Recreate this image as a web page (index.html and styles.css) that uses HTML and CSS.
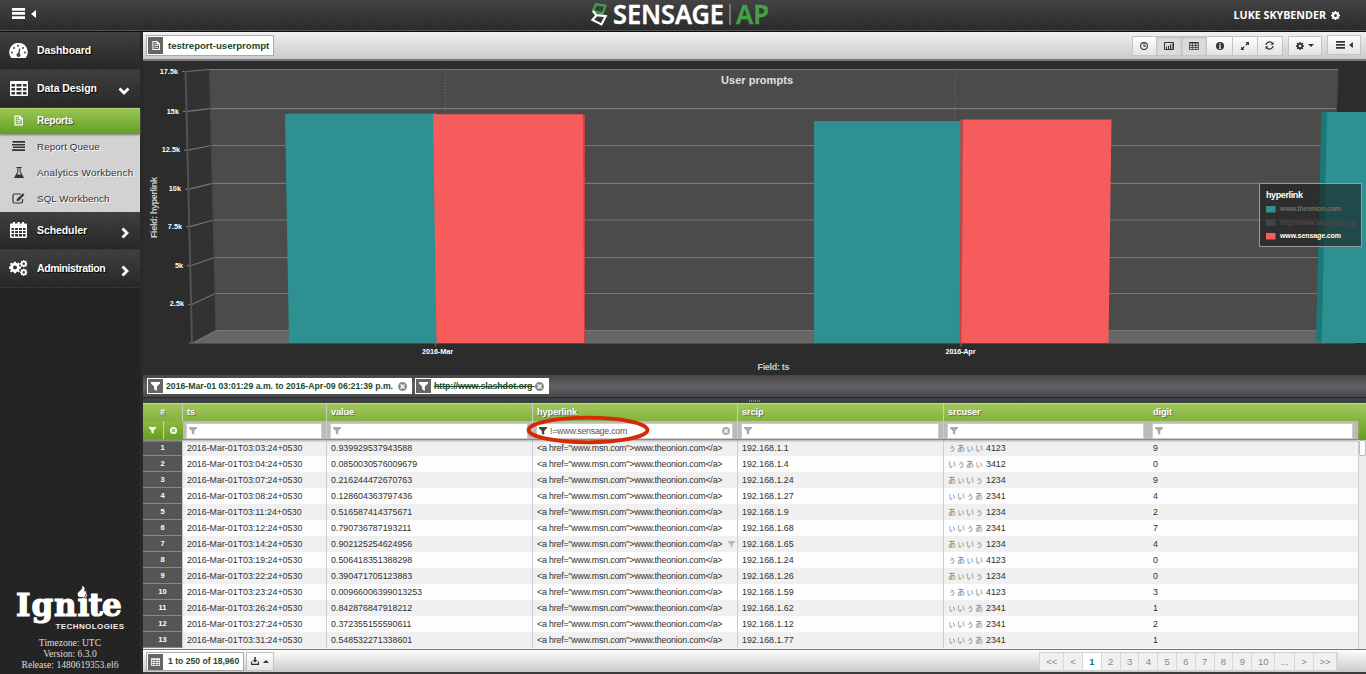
FILE: index.html
```html
<!DOCTYPE html>
<html lang="en">
<head>
<meta charset="utf-8">
<title>Sensage AP</title>
<link rel="stylesheet" href="styles.css">
</head>
<body>
<svg class="sprite" aria-hidden="true">
  <symbol id="i-funnel" viewBox="0 0 10 10"><path d="M0 0h10v1.600L6.500 5v5L3.500 8V5L0 1.600z"/></symbol>
  <symbol id="i-clear" viewBox="0 0 10 10"><path fill-rule="evenodd" d="M5 0a5 5 0 1 1 0 10A5 5 0 0 1 5 0zM3.300 2.300l-1 1L4 5 2.300 6.700l1 1L5 6l1.700 1.700 1-1L6 5l1.700-1.700-1-1L5 4z"/></symbol>
  <symbol id="i-doc" viewBox="0 0 10 11"><path fill-rule="evenodd" d="M.5 0h6L10 3.300V11H.5zM1.800 1.200v8.600h6.900V4.300H5.600V1.200zM3 5.200h4.500v1H3zM3 7.400h4.500v1H3zM3 2.800h1.700v1H3z"/></symbol>
  <symbol id="i-table" viewBox="0 0 18 15"><path fill-rule="evenodd" d="M1 0h16a1 1 0 0 1 1 1v13a1 1 0 0 1-1 1H1a1 1 0 0 1-1-1V1a1 1 0 0 1 1-1zM1.500 3v2.500H5V3zm5 0v2.500h5V3zM13 3v2.500h3.500V3zM1.500 7v2.500H5V7zm5 0v2.500h5V7zM13 7v2.500h3.500V7zM1.500 11v2.500H5V11zm5 0v2.500h5V11zm6.500 0v2.500h3.500V11z"/></symbol>
  <symbol id="i-cog" viewBox="0 0 12 12"><path fill-rule="evenodd" d="M5 0h2l.3 1.600 1 .4L9.700 1.100 11 2.400 10 3.800l.4 1 1.600.3v2l-1.600.3-.4 1 1 1.300-1.300 1.300-1.400-.9-1 .4L7 12H5l-.3-1.500-1-.4-1.400.9L1 9.700l.9-1.300-.4-1L0 7V5l1.500-.3.400-1L1 2.400 2.300 1.100l1.400.9 1-.4zM6 4a2 2 0 1 0 0 4 2 2 0 0 0 0-4z"/></symbol>
  <symbol id="i-menu" viewBox="0 0 13 11"><path d="M0 0h13v2.700H0zM0 4.100h13v2.700H0zM0 8.200h13v2.700H0z"/></symbol>
  <symbol id="i-left" viewBox="0 0 5 8"><path d="M5 0v8L0 4z"/></symbol>
  <symbol id="i-down" viewBox="0 0 8 4"><path d="M0 0h8L4 4z"/></symbol>
  <symbol id="i-up" viewBox="0 0 8 4"><path d="M0 4h8L4 0z"/></symbol>
</svg>

<header class="top">
  <div class="top-menu"><svg class="menu-ic"><use href="#i-menu"/></svg><svg class="tri-ic"><use href="#i-left"/></svg></div>
  <svg class="logo" width="184" height="30" viewBox="588 0 184 30">
    <path d="M596 4.200l9.500 1.600-2.800 7.600-9.800-2.300zM602.700 13.400l-4 2" fill="none" stroke="#43a047" stroke-width="2.200"/>
    <path d="M596.500 15.200l9.200.9-4.200 8.300-9-4.400zM592.900 11l3.600 4.200" fill="none" stroke="#fff" stroke-width="2.200"/>
    <text x="613" y="24" class="logo-name" textLength="111" lengthAdjust="spacingAndGlyphs">SENSAGE</text>
    <path d="M730 4v21" stroke="#8b8b8b" stroke-width="1.500"/>
    <text x="736" y="24" class="logo-ap" textLength="33" lengthAdjust="spacingAndGlyphs">AP</text>
  </svg>
  <div class="user">LUKE SKYBENDER <svg class="cog-ic"><use href="#i-cog"/></svg></div>
</header>

<div class="body">
  <aside class="side">
    <a class="item"><span class="ic"><svg width="19" height="15" viewBox="0 0 19 15"><path fill="#fff" d="M2.300 15A9.300 9.300 0 1 1 16.700 15z"/><path d="M9.300 12.500l1.500-7" stroke="#333" stroke-width="1.200"/><g fill="#444"><circle cx="9.500" cy="12" r="2"/><circle cx="3" cy="9.500" r="1"/><circle cx="16" cy="9.500" r="1"/><circle cx="5" cy="5" r="1"/><circle cx="14" cy="5" r="1"/><circle cx="9" cy="2.700" r="1"/></g></svg></span><span class="lbl">Dashboard</span></a>
    <a class="item"><span class="ic"><svg width="18" height="15"><use href="#i-table"/></svg></span><span class="lbl">Data Design</span><svg class="chev" width="12" height="8" viewBox="0 0 12 8"><path d="M1.500 1.500L6 6l4.500-4.500"/></svg></a>
    <a class="sub active"><span class="ic"><svg width="9" height="11"><use href="#i-doc"/></svg></span><span>Reports</span></a>
    <a class="sub"><span class="ic"><svg width="13" height="10" viewBox="0 0 13 10"><path d="M0 0h13v1.800H1zM0 2.900h13v1.500H0zM1 5.600h12v1.400H1zM0 8.200h13V10H0z"/></svg></span><span class="queue">Report Queue</span></a>
    <a class="sub"><span class="ic"><svg width="10" height="11" viewBox="0 0 10 11"><path fill-rule="evenodd" d="M2.500 0h5v1H6.600v3.500L10 11H0l3.400-6.500V1h-.9zM4.400 1v3.800L3 7.500h4L5.600 4.800V1z"/></svg></span><span class="analytics">Analytics Workbench</span></a>
    <a class="sub"><span class="ic"><svg width="13" height="11" viewBox="0 0 13 11"><path d="M9 1H2.500Q1 1 1 2.500v6Q1 10 2.500 10h6.500Q10.500 10 10.500 8.500V6" fill="none" stroke="#333" stroke-width="1.200"/><path d="M11 .3l1.500 1.500L6.500 8H4.700V6.300z"/></svg></span><span class="sql">SQL Workbench</span></a>
    <a class="item"><span class="ic"><svg width="17" height="16" viewBox="0 0 17 16"><path fill="#fff" fill-rule="evenodd" d="M1 1.500h2V0h2v1.500h2.500V0h2v1.500H12V0h2v1.500h2a1 1 0 0 1 1 1V15a1 1 0 0 1-1 1H1a1 1 0 0 1-1-1V2.500a1 1 0 0 1 1-1zM1.500 6v2H4V6zm3.600 0v2H8V6zM9 6v2h3V6zm4 0v2h2.500V6zM1.500 9v2H4V9zm3.600 0v2H8V9zM9 9v2h3V9zm4 0v2h2.500V9zM1.500 12v2.500H4V12zm3.600 0v2.500H8V12zM9 12v2.500h3V12zm4 0v2.500h2.500V12z"/></svg></span><span class="lbl">Scheduler</span><svg class="chev right" width="8" height="12" viewBox="0 0 8 12"><path d="M1.500 1.500L6 6l-4.500 4.500"/></svg></a>
    <a class="item"><span class="ic"><svg width="19" height="16" viewBox="0 0 19 16"><use href="#i-cog" x="0" y="1.500" width="12" height="12"/><use href="#i-cog" x="11" y="0" width="7.500" height="7.500"/><use href="#i-cog" x="11" y="8.500" width="7.500" height="7.500"/></svg></span><span class="lbl admin">Administration</span><svg class="chev right" width="8" height="12" viewBox="0 0 8 12"><path d="M1.500 1.500L6 6l-4.500 4.500"/></svg></a>
    <div class="brand">
      <svg width="112" height="50" viewBox="14 582 112 50">
        <text x="16 31.500 54 77.500 88.500 102" y="616" class="ignite">Ignite</text>
        <path d="M79 597.500q-4-4 1-7 3-2 1.500-5.500 5 2.500 3 6 1.500 0 1-1.500 2.500 4-1 8z" fill="#fff" stroke="#242424" stroke-width=".8"/>
        <text x="55.500" y="629" class="tech" textLength="68.500">TECHNOLOGIES</text>
      </svg>
      <p>Timezone: UTC</p><p>Version: 6.3.0</p><p>Release: 1480619353.el6</p>
    </div>
  </aside>

  <main class="main">
    <div class="toolbar">
      <div class="namebox"><span class="sq"><svg width="8" height="9"><use href="#i-doc"/></svg></span><span class="name">testreport-userprompt</span></div>
      <div class="tools">
        <div class="group">
          <span class="btn"><svg width="8" height="8" viewBox="0 0 9 9"><path d="M4.500 2v2.700h2.300M4.500.7a3.800 3.800 0 1 1 0 7.600 3.800 3.800 0 0 1 0-7.600z" fill="none" stroke="#333" stroke-width="1.200"/></svg></span>
          <span class="btn on"><svg width="10" height="8" viewBox="0 0 10 8"><path d="M.5.5h9v7h-9z" fill="none" stroke="#333"/><path d="M2 4.500h1V7H2zM4 3.700h1V7H4zM6 2.500h1V7H6zM7.800 1.500h.8V7h-.8z"/></svg></span>
          <span class="btn on"><svg width="10" height="8"><use href="#i-table"/></svg></span>
          <span class="btn"><svg width="8" height="8" viewBox="0 0 8 8"><path fill-rule="evenodd" d="M4 0a4 4 0 1 1 0 8 4 4 0 0 1 0-8zM3.300 1.200v1.300h1.500V1.200zM2.800 3.200v.8h.6v1.900h-.6v.8h2.600v-.8h-.6V3.200z"/></svg></span>
          <span class="btn"><svg width="8" height="8" viewBox="0 0 8 8"><path d="M4.500 0H8v3.500L6.800 2.300 5.300 3.800l-1-1 1.500-1.500zM3.500 8H0V4.500l1.200 1.200 1.500-1.500 1 1-1.500 1.500z"/></svg></span>
          <span class="btn"><svg width="9" height="9" viewBox="0 0 9 9"><path d="M1 4A3.500 3.500 0 0 1 7.200 2.200M8 5a3.500 3.500 0 0 1-6.200 1.800" fill="none" stroke="#333" stroke-width="1.300"/><path d="M8.500.7v3H5.500zM.5 8.300v-3h3z"/></svg></span>
        </div>
        <span class="btn wide"><svg width="8" height="8"><use href="#i-cog"/></svg><svg width="6" height="3"><use href="#i-down"/></svg></span>
        <span class="btn wide menu"><svg width="9" height="8" viewBox="0 0 9 8"><path d="M0 0h9v1.800H0zM0 3h9v1.800H0zM0 6h9v1.800H0z"/></svg><svg width="4" height="6"><use href="#i-left"/></svg></span>
      </div>
    </div>

    <svg class="chart" width="1223" height="314" viewBox="143 61 1223 314">
      <path d="M186 71.500L209.500 69.500 216 331 192 343z" fill="#323232"/>
      <path d="M209.500 69.500H1338L1331 331H216z" fill="#4b4b4b"/>
      <path d="M216 331H1331L1356 343H192z" fill="#666"/>
      <g fill="none" stroke="#777" stroke-width="1.200">
        <path d="M182 71.500H186L209.500 69.500H1338M183 111.300H187L210.500 108.700H1337M184 150.200H188L211.500 145.500H1336M185 189.200H189L212.500 183.300H1335M186 226.700H190L213.500 220H1334M187 265.700H191L214 257.500H1333M188 304.500H192L215 293.500H1332M189 343H193L216 330.500H1331"/>
        <path d="M192 343H1355M435.500 343v3.500M961 343v3.500" stroke="#6c6c6c"/>
        <path d="M185.500 71L192 343" stroke="#525252" stroke-width="2"/>
        <path d="M209.500 70L216 330M1338 70l-2 50" stroke="#484848"/>
        <path d="M445.500 71v42M955 71v50" stroke="#6f6f6f" stroke-width="1" stroke-dasharray="1 2"/>
      </g>
      <path d="M285 114.500l4-1H437V343H289z" fill="#2e9090"/>
      <path d="M583 114.500l2 .5V343h-2z" fill="#c94343"/>
      <path d="M433 114.300H583L584 343H436.500z" fill="#f65c5c"/>
      <path d="M814 121H962V343H814z" fill="#2e9090"/>
      <path d="M960.500 119.500h3L961.500 343h-1.700z" fill="#ca4040"/>
      <path d="M963 119.500h148.500L1108.500 343H961.500z" fill="#f65c5c"/>
      <path d="M1321.500 112h6L1321.500 343l-5.500-3z" fill="#177a78"/>
      <path d="M1327 112H1366V343H1321.500z" fill="#2e9090"/>
      <g class="axis">
        <text x="178" y="74" text-anchor="end">17.5k</text>
        <text x="179" y="114" text-anchor="end">15k</text>
        <text x="180" y="152" text-anchor="end">12.5k</text>
        <text x="181" y="191" text-anchor="end">10k</text>
        <text x="182" y="229" text-anchor="end">7.5k</text>
        <text x="183" y="268" text-anchor="end">5k</text>
        <text x="184" y="306" text-anchor="end">2.5k</text>
        <text x="422" y="354" textLength="31">2016-Mar</text>
        <text x="945.500" y="354" textLength="30">2016-Apr</text>
      </g>
      <text class="title" x="721" y="84" textLength="72">User prompts</text>
      <text class="axt" x="757.500" y="370" textLength="32">Field: ts</text>
      <text class="axt" transform="translate(157 238) rotate(-90)" textLength="61">Field: hyperlink</text>
      <rect x="1259.500" y="183.500" width="102" height="63" fill="#1b1b1b" fill-opacity=".6" stroke="#999"/>
      <text class="lgt" x="1266" y="198" textLength="37">hyperlink</text>
      <path d="M1266 206h9.500v6.500H1266z" fill="#2e9090"/><path d="M1266 219.500h9.500v6.500H1266z" fill="#444"/><path d="M1266 233h9.500v6.500H1266z" fill="#f65c5c"/>
      <g class="lg"><text x="1280" y="211" fill="#6b7274" textLength="61">www.theonion.com</text><text x="1280" y="225" fill="#484848" textLength="76">http://www.slashdot.org</text><text x="1280" y="238" fill="#fff" textLength="61">www.sensage.com</text></g>
    </svg>

    <div class="chips">
      <div class="chip first"><span class="sq"><svg width="9" height="9"><use href="#i-funnel"/></svg></span><span class="t">2016-Mar-01 03:01:29 a.m. to 2016-Apr-09 06:21:39 p.m.</span><svg class="x"><use href="#i-clear"/></svg></div>
      <div class="chip"><span class="sq"><svg width="9" height="9"><use href="#i-funnel"/></svg></span><span class="t struck">http://www.slashdot.org </span><svg class="x"><use href="#i-clear"/></svg></div>
    </div>
    <div class="splitter"><i></i></div>

    <section class="grid">
      <div class="table">
        <div class="tr head"><span>#</span><span>ts</span><span>value</span><span>hyperlink</span><span>srcip</span><span class="nb">srcuser</span><span>digit</span></div>
        <div class="tr filt">
          <span class="fbtns"><b><svg width="7" height="7"><use href="#i-funnel"/></svg></b><b><svg width="7" height="7"><use href="#i-clear"/></svg></b></span>
          <span><i class="inp"><svg><use href="#i-funnel"/></svg></i></span>
          <span><i class="inp"><svg><use href="#i-funnel"/></svg></i></span>
          <span><i class="inp set"><svg><use href="#i-funnel"/></svg><em>!=www.sensage.com</em><svg class="x"><use href="#i-clear"/></svg></i></span>
          <span><i class="inp"><svg><use href="#i-funnel"/></svg></i></span>
          <span class="nb"><i class="inp"><svg><use href="#i-funnel"/></svg></i></span>
          <span><i class="inp"><svg><use href="#i-funnel"/></svg></i></span>
          <svg class="mark" width="124" height="30" viewBox="0 0 124 30"><ellipse cx="62" cy="15" rx="59.500" ry="12.300"/></svg>
        </div>
        <div class="tr"><span>1</span><span>2016-Mar-01T03:03:24+0530</span><span>0.939929537943588</span><span>&lt;a href="www.msn.com"&gt;www.theonion.com&lt;/a&gt;</span><span>192.168.1.1</span><span><q>ぅあぃい</q>4123</span><span>9</span></div>
        <div class="tr"><span>2</span><span>2016-Mar-01T03:04:24+0530</span><span>0.0850030576009679</span><span>&lt;a href="www.msn.com"&gt;www.theonion.com&lt;/a&gt;</span><span>192.168.1.4</span><span><q>いぅあぃ</q>3412</span><span>0</span></div>
        <div class="tr"><span>3</span><span>2016-Mar-01T03:07:24+0530</span><span>0.216244472670763</span><span>&lt;a href="www.msn.com"&gt;www.theonion.com&lt;/a&gt;</span><span>192.168.1.24</span><span><q>あぃいぅ</q>1234</span><span>9</span></div>
        <div class="tr"><span>4</span><span>2016-Mar-01T03:08:24+0530</span><span>0.128604363797436</span><span>&lt;a href="www.msn.com"&gt;www.theonion.com&lt;/a&gt;</span><span>192.168.1.27</span><span><q>ぃいぅあ</q>2341</span><span>4</span></div>
        <div class="tr"><span>5</span><span>2016-Mar-01T03:11:24+0530</span><span>0.516587414375671</span><span>&lt;a href="www.msn.com"&gt;www.theonion.com&lt;/a&gt;</span><span>192.168.1.9</span><span><q>あぃいぅ</q>1234</span><span>2</span></div>
        <div class="tr"><span>6</span><span>2016-Mar-01T03:12:24+0530</span><span>0.790736787193211</span><span>&lt;a href="www.msn.com"&gt;www.theonion.com&lt;/a&gt;</span><span>192.168.1.68</span><span><q>ぃいぅあ</q>2341</span><span>7</span></div>
        <div class="tr"><span>7</span><span>2016-Mar-01T03:14:24+0530</span><span>0.902125254624956</span><span class="hot">&lt;a href="www.msn.com"&gt;www.theonion.com&lt;/a&gt;<svg><use href="#i-funnel"/></svg></span><span>192.168.1.65</span><span><q>あぃいぅ</q>1234</span><span>4</span></div>
        <div class="tr"><span>8</span><span>2016-Mar-01T03:19:24+0530</span><span>0.506418351388298</span><span>&lt;a href="www.msn.com"&gt;www.theonion.com&lt;/a&gt;</span><span>192.168.1.24</span><span><q>ぅあぃい</q>4123</span><span>0</span></div>
        <div class="tr"><span>9</span><span>2016-Mar-01T03:22:24+0530</span><span>0.390471705123883</span><span>&lt;a href="www.msn.com"&gt;www.theonion.com&lt;/a&gt;</span><span>192.168.1.26</span><span><q>あぃいぅ</q>1234</span><span>0</span></div>
        <div class="tr"><span>10</span><span>2016-Mar-01T03:23:24+0530</span><span>0.00966006399013253</span><span>&lt;a href="www.msn.com"&gt;www.theonion.com&lt;/a&gt;</span><span>192.168.1.59</span><span><q>ぅあぃい</q>4123</span><span>3</span></div>
        <div class="tr"><span>11</span><span>2016-Mar-01T03:26:24+0530</span><span>0.842876847918212</span><span>&lt;a href="www.msn.com"&gt;www.theonion.com&lt;/a&gt;</span><span>192.168.1.62</span><span><q>ぃいぅあ</q>2341</span><span>1</span></div>
        <div class="tr"><span>12</span><span>2016-Mar-01T03:27:24+0530</span><span>0.372355155590611</span><span>&lt;a href="www.msn.com"&gt;www.theonion.com&lt;/a&gt;</span><span>192.168.1.12</span><span><q>ぃいぅあ</q>2341</span><span>2</span></div>
        <div class="tr"><span>13</span><span>2016-Mar-01T03:31:24+0530</span><span>0.548532271338601</span><span>&lt;a href="www.msn.com"&gt;www.theonion.com&lt;/a&gt;</span><span>192.168.1.77</span><span><q>ぃいぅあ</q>2341</span><span>1</span></div>
      </div>
      <div class="scroll"><div class="corner"></div><div class="thumb"></div></div>
    </section>

    <footer class="foot">
      <div class="namebox count"><span class="sq"><svg width="9" height="8"><use href="#i-table"/></svg></span><span class="name">1 to 250 of 18,960</span></div>
      <span class="btn dl"><svg width="8" height="8" viewBox="0 0 8 8"><path d="M3.200 0h1.600v3H6.500L4 5.500 1.500 3h1.700zM0 4.500h1.200v2.200h5.600V4.500H8V8H0z"/></svg><svg width="6" height="3"><use href="#i-up"/></svg></span>
      <nav class="pages"><a class="w24">&lt;&lt;</a><a>&lt;</a><a class="cur">1</a><a>2</a><a>3</a><a>4</a><a>5</a><a>6</a><a>7</a><a>8</a><a>9</a><a class="w23">10</a><a class="w20">...</a><a>&gt;</a><a class="w23">&gt;&gt;</a></nav>
    </footer>
  </main>
</div>
</body>
</html>
```
FILE: styles.css
```css
* { box-sizing: border-box; }
body { margin: 0; width: 1366px; height: 674px; overflow: hidden; background: #2a2a2a; font-family: "Liberation Sans", Arial, sans-serif; font-size: 8.850px; color: #333; }
svg { display: block; flex: none; }
.sprite { position: absolute; width: 0; height: 0; }

.top { height: 32px; display: grid; grid-template-columns: 588px 184px 1fr; align-items: center; background: repeating-linear-gradient(45deg, rgba(0,0,0,.1) 0 1px, transparent 1px 3px), linear-gradient(#454545, #2c2c2c); border-bottom: 1px solid #0c0c0c; box-shadow: inset 0 -1px #555; }
.top-menu { display: flex; align-items: center; gap: 6px; padding-left: 12px; fill: #fff; padding-bottom: 4px; }
.menu-ic { width: 13px; height: 11px; }
.tri-ic { width: 5px; height: 8px; }
.logo { align-self: start; overflow: visible; }
.logo-name, .logo-ap { font: 600 26.500px "Noto Sans", sans-serif; fill: #fff; stroke: #fff; stroke-width: .4; }
.logo-ap { fill: #43a047; stroke: #43a047; }
.user { display: flex; align-items: center; justify-content: flex-end; gap: 5px; padding: 0 26px 1px 0; color: #fff; font: bold 10.700px "Open Sans", sans-serif; }
.cog-ic { width: 9px; height: 9px; fill: #fff; }

.body { display: flex; height: 642px; }
.side { width: 143px; display: flex; flex-direction: column; border-right: 3px solid #292929; background: #242424; }
.item { height: 38px; display: flex; align-items: center; padding-bottom: 2px; color: #fff; background: repeating-linear-gradient(45deg, rgba(0,0,0,.1) 0 1px, transparent 1px 3px), linear-gradient(#414141, #292929); border-top: 1px solid #404040; border-bottom: 1px solid #353535; font-weight: bold; font-size: 10.500px; text-shadow: 1px 1px 1px #000; }
.ic { width: 37px; display: flex; justify-content: center; fill: currentColor; }
.lbl { letter-spacing: -.08px; flex: 1; }
.admin { letter-spacing: -.42px; }
.chev { margin: 6px 10px 0 0; fill: none; stroke: #fff; stroke-width: 2.800; }
.chev.right { margin-right: 11px; }
.sub { height: 26px; display: flex; align-items: center; padding-bottom: 2px; background: #d2d2d2; color: #333; font-size: 9.800px; text-shadow: 1px 1px #fff; }
.sub.active { background: linear-gradient(#9bc454, #639f21); color: #fff; font-weight: bold; font-size: 10px; letter-spacing: -.25px; text-shadow: 1px 1px 1px #444; border-top: 1px solid #b1d678; box-shadow: 0 1px 2px #777; position: relative; }
.queue { letter-spacing: .1px; }
.analytics { letter-spacing: .27px; }
.sql { letter-spacing: .1px; }
.brand { margin-top: auto; height: 92px; color: #ddd; text-align: center; font: 9.600px/11px "Liberation Serif", serif; }
.brand svg { margin: 0 0 5px 14px; }
.brand p { margin: 0; }
.ignite { font: bold 31px "DejaVu Serif", serif; fill: #fff; stroke: #fff; stroke-width: 1.200; }
.tech { font: bold 8px "Liberation Sans", sans-serif; fill: #eee; }

.main { width: 1223px; display: flex; flex-direction: column; }
.toolbar { height: 29px; display: flex; justify-content: space-between; padding: 3px 5px 0 3px; background: linear-gradient(#f1f1f1, #cacaca); border-bottom: 2px solid #777; }
.namebox { width: 128px; height: 21px; display: flex; align-items: center; background: #fff; border: 1px solid #aaa; padding-left: 1px; gap: 5px; color: #24492a; font-weight: bold; }
.name { font-size: 9.600px; white-space: nowrap; padding-bottom: 1px; }
.sq { width: 15px; height: 17px; background: #666; display: flex; align-items: center; justify-content: center; fill: #fff; flex: none; }
.tools { display: flex; gap: 5px; }
.group { display: flex; padding-top: 1px; }
.btn { width: 25px; height: 20px; background: linear-gradient(#fefefe, #e4e4e4); border: 1px solid #c4c4c4; border-left-width: 0; display: flex; align-items: center; justify-content: center; fill: #333; gap: 4px; padding-bottom: 1px; }
.btn:first-child { border-left-width: 1px; }
.btn.on { background: #dcdcdc; box-shadow: inset 0 1px 2px #bbb; }
.group .btn { width: 25.200px; }
.btn.wide { width: 34px; border-left-width: 1px; margin-top: 1px; }
.btn.menu { margin-top: 0; }

.chart { background: #2c2c2c; }
.axis { font: bold 7.300px "Liberation Sans", sans-serif; fill: #fff; }
.title { font: bold 11px "Liberation Sans", sans-serif; fill: #e0e0e0; }
.axt { font: bold 9px "Liberation Sans", sans-serif; fill: #ccc; }
.lgt { font: bold 9px "Liberation Sans", sans-serif; fill: #fff; }
.lg { font: bold 7px "Liberation Sans", sans-serif; }

.chips { height: 22px; display: flex; gap: 3px; align-items: flex-start; padding: 3px 3px 0 4px; background: linear-gradient(#464648, #626266 50%, #48484a); }
.chip { width: 134px; height: 16px; background: #fff; display: flex; align-items: center; color: #24492a; font-weight: bold; font-size: 8.680px; }
.chip.first { width: 265px; }
.chip .sq { height: 14px; width: 15px; margin-left: 1px; }
.chip .t { white-space: pre; margin-left: 3px; width: 227px; padding-bottom: 1px; }
.chip .t.struck { width: 98px; text-decoration: line-through; font-size: 8.900px; letter-spacing: -.1px; }
.chip .x { width: 9px; height: 9px; margin-left: 5px; fill: #8a8a8a; }
.chip .struck + .x { margin-left: 3px; }
.splitter { height: 7px; background: #3c4144; border-top: 1px solid #292929; border-bottom: 1px solid #222; display: flex; align-items: center; justify-content: center; }
.splitter i { width: 12px; height: 2px; background: repeating-linear-gradient(90deg, #888 0 1px, transparent 1px 2px); }

.grid { height: 247px; display: flex; border-bottom: 1px solid #777; border-top: 1px solid #c8c8c8; background: #f6f6f6; overflow: hidden; margin-top: -1px; }
.table { width: 1215px; }
.tr { height: 16px; display: grid; grid-template-columns: 40px 144px 206px 205px 206px 205px 209px; background: #fdfdfd; color: #303030; }
.tr:nth-child(odd) { background: #f0f0f0; }
.tr > span { padding-left: 4px; border-right: 1px solid #ccc; line-height: 16px; white-space: nowrap; overflow: hidden; }
.tr > span:nth-child(1) { background: #555; color: #fff; font-weight: bold; font-size: 7.500px; text-align: center; padding: 0; border-bottom: 1px solid #888; }
.tr > span:nth-child(6), .tr > span:nth-child(7) { border-right-color: transparent; }
.tr > span:nth-child(4) { letter-spacing: -.19px; }
.tr q { quotes: none; font-family: "Noto Sans CJK JP", sans-serif; color: #777; font-size: 8px; letter-spacing: 1px; margin-right: 2px; line-height: 14px; }
.tr > span.hot { display: flex; align-items: center; justify-content: space-between; padding-right: 2px; }
.hot svg { width: 7px; height: 7px; fill: #bbb; }
.tr.head { height: 17px; background: linear-gradient(#a3c85c, #83b23a); color: #fff; font-weight: bold; font-size: 9.200px; text-shadow: 1px 1px 1px #666; }
.tr.head > span { background: none; letter-spacing: -.1px; font-size: 9.200px; line-height: 17px; border-bottom: 0; }
.tr.filt { height: 19px; background: #bbb; position: relative; border-bottom: 1px solid #888; box-shadow: 0 1px 2px #aaa; z-index: 1; }
.tr.filt > span { display: flex; align-items: center; padding: 1px 4px 0 3px; }
.tr.filt > .fbtns { padding: 0; border: 0; background: #ccc; gap: 1px; }
.fbtns b { flex: 1; height: 19px; display: flex; align-items: center; justify-content: center; background: linear-gradient(#8dbb42, #629d20); fill: #fff; }
.inp { flex: 1; height: 16px; background: #fff; border: 1px solid #ccc; display: flex; align-items: center; padding: 0 2px; font-style: normal; }
.inp svg { width: 8px; height: 8px; fill: #aaa; }
.inp.set svg { fill: #444; }
.inp em { font-style: normal; margin-left: 3px; flex: 1; color: #555; letter-spacing: -.25px; }
.inp.set .x { fill: #aaa; }
.mark { position: absolute; left: 383px; top: -6px; fill: none; stroke: #d42a05; stroke-width: 3.800; }
.scroll { width: 8px; background: #eee; border-left: 1px solid #ccc; }
.corner { height: 36px; margin-left: -1px; background: linear-gradient(#a3c85c, #629d20); }
.thumb { height: 16px; background: #fff; border: 1px solid #bbb; border-radius: 2px; }

.foot { height: 24px; display: flex; align-items: flex-start; padding: 2px 28px 0 3px; background: linear-gradient(#fdfdfd, #cbcbcb); border-bottom: 2px solid #3c3c3c; }
.foot .namebox { width: 98px; height: 19px; gap: 5px; }
.foot .sq { height: 16px; }
.foot .name { font-size: 8.600px; }
.dl { width: 28px; height: 19px; margin-left: 2px; border-left-width: 1px; }
.pages { margin-left: auto; display: flex; height: 19px; border: 1px solid #d2d2d2; }
.pages a { width: 18.800px; border-right: 1px solid #d8d8d8; background: #f0f0f0; color: #888; text-align: center; line-height: 18px; font-size: 9.500px; }
.pages .cur { background: #fff; color: #1a7a85; font-weight: bold; }
.pages .w24 { width: 24px; }
.pages .w23 { width: 23px; }
.pages .w20 { width: 20px; }
```
